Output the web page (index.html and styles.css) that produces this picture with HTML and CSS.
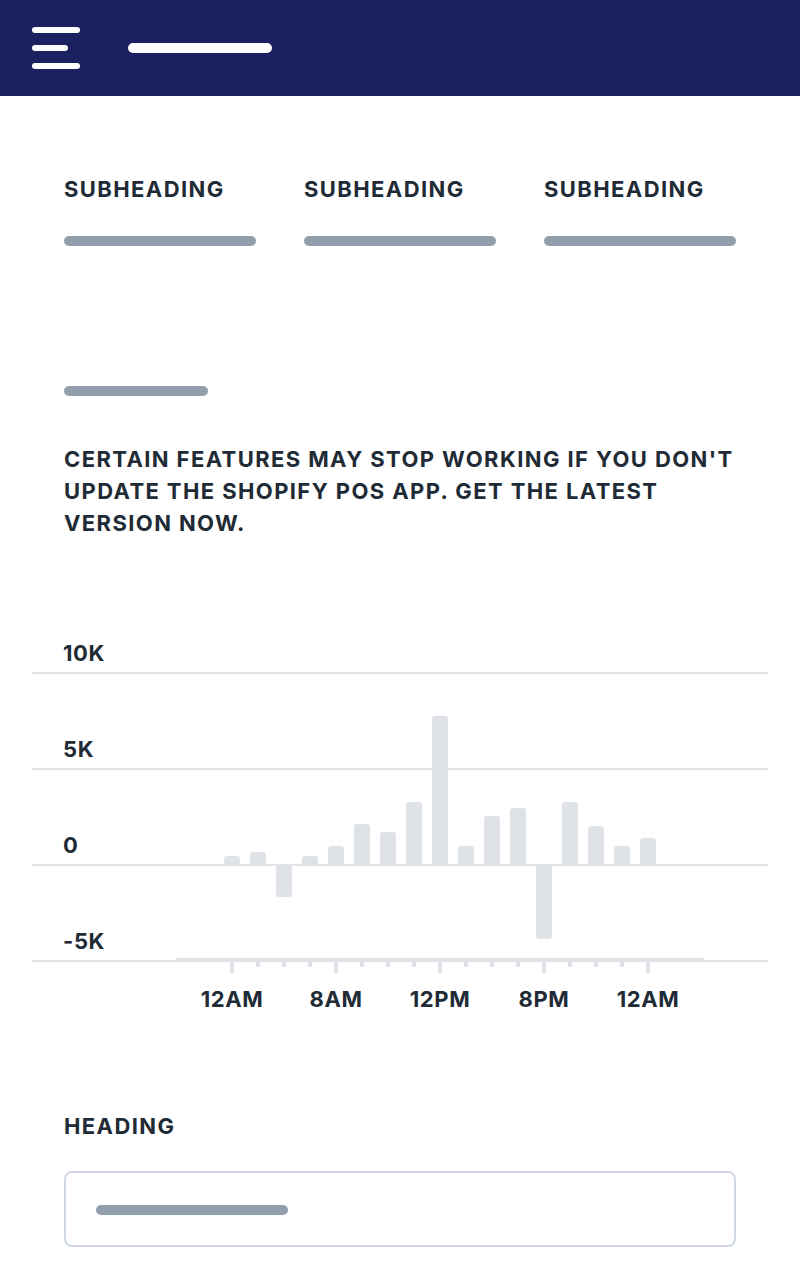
FILE: index.html
```html
<!DOCTYPE html>
<html lang="en">
<head>
    <meta charset="UTF-8">
    <meta name="viewport" content="width=device-width, initial-scale=1.0">
    <title>Sales overview</title>
    <link rel="stylesheet" href="styles.css">
</head>
<body>
    <!-- Top bar -->
    <header class="topbar">
        <div class="menu-icon">
            <span></span>
            <span class="short"></span>
            <span></span>
        </div>
        <div class="title-bar"></div>
    </header>

    <main class="content">
        <!-- Summary columns -->
        <div class="summary">
            <div class="summary-item">
                <h3>Subheading</h3>
                <div class="line"></div>
            </div>
            <div class="summary-item">
                <h3>Subheading</h3>
                <div class="line"></div>
            </div>
            <div class="summary-item">
                <h3>Subheading</h3>
                <div class="line"></div>
            </div>
        </div>

        <div class="line short-line"></div>

        <p class="notice">Certain features may stop working if you don't update the Shopify POS app. Get the latest version now.</p>
    </main>

    <!-- Chart -->
    <div class="chart">
        <div class="grid-row"><span>10K</span></div>
        <div class="grid-row"><span>5K</span></div>
        <div class="grid-row"><span>0</span></div>
        <div class="grid-row"><span>-5K</span></div>

        <div class="plot">
            <div class="col"><div class="up"><i style="height:8px"></i></div><div class="down"></div></div>
            <div class="col"><div class="up"><i style="height:12px"></i></div><div class="down"></div></div>
            <div class="col"><div class="up"></div><div class="down"><i style="height:31px"></i></div></div>
            <div class="col"><div class="up"><i style="height:8px"></i></div><div class="down"></div></div>
            <div class="col"><div class="up"><i style="height:18px"></i></div><div class="down"></div></div>
            <div class="col"><div class="up"><i style="height:40px"></i></div><div class="down"></div></div>
            <div class="col"><div class="up"><i style="height:32px"></i></div><div class="down"></div></div>
            <div class="col"><div class="up"><i style="height:62px"></i></div><div class="down"></div></div>
            <div class="col"><div class="up"><i style="height:148px"></i></div><div class="down"></div></div>
            <div class="col"><div class="up"><i style="height:18px"></i></div><div class="down"></div></div>
            <div class="col"><div class="up"><i style="height:48px"></i></div><div class="down"></div></div>
            <div class="col"><div class="up"><i style="height:56px"></i></div><div class="down"></div></div>
            <div class="col"><div class="up"></div><div class="down"><i style="height:73px"></i></div></div>
            <div class="col"><div class="up"><i style="height:62px"></i></div><div class="down"></div></div>
            <div class="col"><div class="up"><i style="height:38px"></i></div><div class="down"></div></div>
            <div class="col"><div class="up"><i style="height:18px"></i></div><div class="down"></div></div>
            <div class="col"><div class="up"><i style="height:26px"></i></div><div class="down"></div></div>
        </div>

        <div class="x-axis"></div>
        <div class="ticks">
            <b class="major"></b><b></b><b></b><b></b>
            <b class="major"></b><b></b><b></b><b></b>
            <b class="major"></b><b></b><b></b><b></b>
            <b class="major"></b><b></b><b></b><b></b>
            <b class="major"></b>
        </div>
        <div class="x-labels">
            <span>12AM</span>
            <span>8AM</span>
            <span>12PM</span>
            <span>8PM</span>
            <span>12AM</span>
        </div>
    </div>

    <!-- Form field -->
    <section class="field">
        <h3>Heading</h3>
        <div class="input-box">
            <div class="line input-line"></div>
        </div>
    </section>
</body>
</html>
```

FILE: styles.css
```css
body {
    margin: 0;
    font-family: Inter, "Liberation Sans", sans-serif;
    color: #212b36;
    background: #fff;
}
h3, p {
    margin: 0;
}

/* top bar */
.topbar {
    height: 96px;
    background-color: #1c2260;
    display: flex;
    align-items: center;
    padding-left: 32px;
}
.menu-icon {
    display: flex;
    flex-direction: column;
    gap: 12px;
    width: 48px;
}
.menu-icon span {
    display: block;
    height: 6px;
    width: 48px;
    border-radius: 3px;
    background: #fff;
}
.menu-icon span.short {
    width: 36px;
}
.title-bar {
    margin-left: 48px;
    width: 144px;
    height: 10px;
    border-radius: 5px;
    background: #fff;
}

/* content */
.content {
    padding: 77px 64px 0;
}
.summary {
    display: grid;
    grid-template-columns: repeat(3, 192px);
    gap: 48px;
}
.summary h3, .notice, .field h3 {
    font-size: 22px;
    line-height: 32px;
    font-weight: 700;
    letter-spacing: 1.4px;
    text-transform: uppercase;
}
.line {
    height: 10px;
    border-radius: 5px;
    background: #919eab;
}
.summary .line {
    margin-top: 31px;
}
.short-line {
    width: 144px;
    margin-top: 140px;
}
.notice {
    margin-top: 47px;
}

/* chart */
.chart {
    position: relative;
    margin: 39px 32px 0;
}
.grid-row {
    height: 91px;
    border-bottom: 2px solid #dfe3e8;
    display: flex;
    align-items: flex-end;
    padding-left: 31px;
    padding-bottom: 3px;
}
.grid-row span {
    font-size: 22px;
    line-height: 32px;
    font-weight: 700;
    letter-spacing: 0.6px;
}
.plot {
    position: absolute;
    left: 192px;
    top: 0;
    display: flex;
    gap: 10px;
}
.col {
    width: 16px;
    display: flex;
    flex-direction: column;
}
.col .up {
    height: 286px;
    display: flex;
    flex-direction: column;
    justify-content: flex-end;
}
.col .down {
    margin-top: 2px;
}
.col i {
    display: block;
    width: 16px;
    background: #dfe3e8;
}
.col .up i {
    border-radius: 3px 3px 0 0;
}
.col .down i {
    border-radius: 0 0 3px 3px;
}
.x-axis {
    margin: -4px 0 0 144px;
    width: 528px;
    height: 4px;
    background: #dfe3e8;
    position: relative;
}
.ticks {
    display: flex;
    align-items: flex-start;
    gap: 22px;
    margin-left: 198px;
    height: 11px;
}
.ticks b {
    width: 4px;
    height: 5px;
    background: #dfe3e8;
}
.ticks b.major {
    height: 11px;
}
.x-labels {
    display: flex;
    margin: 10px 0 0 148px;
}
.x-labels span {
    width: 104px;
    text-align: center;
    font-size: 22px;
    line-height: 32px;
    font-weight: 700;
    letter-spacing: 0.6px;
}

/* form field */
.field {
    padding: 95px 64px 0;
}
.input-box {
    margin-top: 29px;
    border: 2px solid #cfd8e1;
    border-radius: 8px;
    padding: 32px 30px 30px;
}
.input-line {
    width: 192px;
}
```
